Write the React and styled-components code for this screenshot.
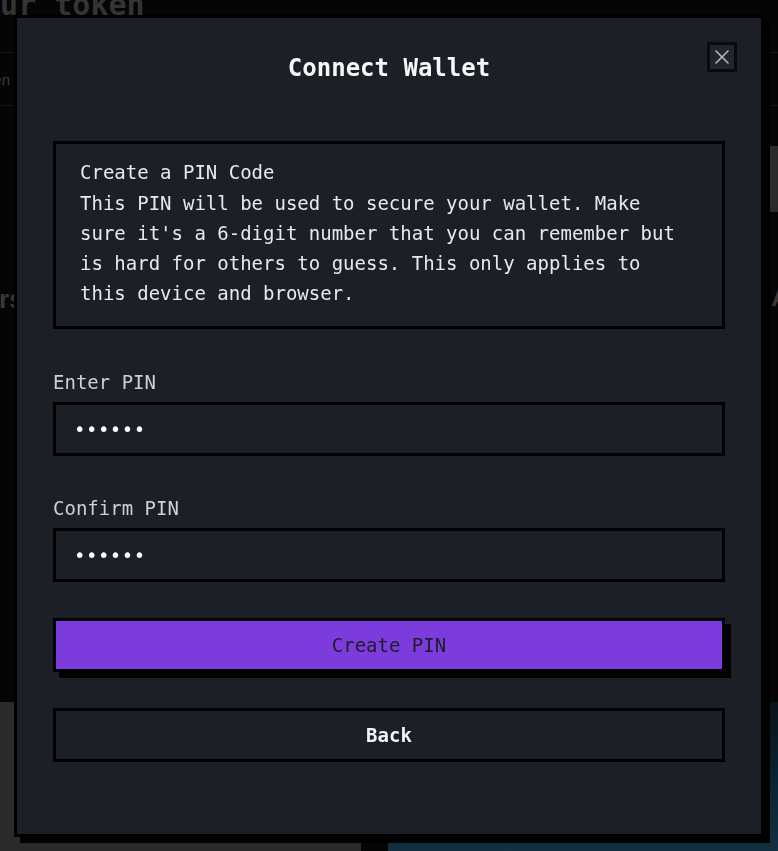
import styled, { createGlobalStyle } from "styled-components";
import { X } from "lucide-react";

const GlobalStyle = createGlobalStyle`
  body {
    margin: 0;
    background: #050506;
    font-family: "DejaVu Sans Mono", "Liberation Mono", monospace;
    overflow: hidden;
  }
`;

// dimmed page that sits behind the modal
const Page = styled.div`
  width: 778px;
  height: 851px;
  overflow: hidden;
  display: flex;
  flex-direction: column;
`;

const Heading = styled.h1`
  margin: -10px 0 0 -36px;
  font-size: 30px;
  line-height: 30px;
  font-weight: 700;
  color: #343434;
  white-space: nowrap;
`;

const TabBar = styled.div`
  margin-top: 32px;
  height: 52px;
  border-top: 1px solid #151515;
  border-bottom: 1px solid #151515;
  display: flex;
  align-items: center;
  justify-content: space-between;
  font-family: "Liberation Sans", sans-serif;
  font-size: 15px;
  color: #3c3c3c;
`;

const TabText = styled.span`
  margin-left: -30px;
`;

const Middle = styled.div`
  flex: 0 0 596px;
  display: flex;
  justify-content: space-between;
  font-family: "Liberation Sans", sans-serif;
  font-size: 26px;
  font-weight: 700;
  color: #3d3630;
`;

const SideCol = styled.div`
  display: flex;
  flex-direction: column;
  align-items: ${({ $right }) => ($right ? "flex-end" : "flex-start")};
  padding-top: ${({ $right }) => ($right ? "40px" : "178px")};
  gap: 70px;
`;

const SideText = styled.span`
  margin-left: ${({ $cut }) => $cut || 0};
  margin-right: ${({ $cutRight }) => $cutRight || 0};
`;

const SideBlock = styled.div`
  width: 8px;
  height: 66px;
  background: #2a2a2a;
`;

const Cards = styled.div`
  display: grid;
  grid-template-columns: 361px 1fr;
  gap: 27px;
  flex: 1;
`;

const Card = styled.div`
  background: ${({ $image }) =>
    $image
      ? "linear-gradient(180deg, #07131a 0%, #0b2230 50%, #123040 100%)"
      : "#2a2a2a"};
`;

const Overlay = styled.div`
  position: fixed;
  inset: 0;
  display: flex;
  align-items: center;
  justify-content: center;
`;

const Modal = styled.div`
  position: relative;
  box-sizing: border-box;
  width: 750px;
  height: 822px;
  background: #1d1f26;
  border: 3px solid #000;
  box-shadow: 6px 6px 0 #000;
  padding: 0 36px;
  display: flex;
  flex-direction: column;
  color: #e6e7ea;
`;

const Title = styled.h2`
  margin: 34px 0 0;
  text-align: center;
  font-size: 24px;
  line-height: 32px;
  font-weight: 700;
  color: #f7f7f8;
`;

const CloseButton = styled.button`
  position: absolute;
  top: 24px;
  right: 24px;
  width: 30px;
  height: 30px;
  padding: 0;
  border: 3px solid #0a0b0d;
  background: #22252d;
  color: #b4b6bb;
  display: flex;
  align-items: center;
  justify-content: center;
  cursor: pointer;
`;

const InfoBox = styled.div`
  margin-top: 57px;
  border: 3px solid #000;
  padding: 13px 40px 18px 24px;
  font-size: 19px;
  line-height: 30px;
  color: #e9e9ec;
`;

const InfoTitle = styled.div`
  margin-bottom: 1px;
`;

const Label = styled.label`
  display: block;
  margin-top: ${({ $gap }) => $gap};
  font-size: 19px;
  line-height: 24px;
  color: #ccd0d7;
`;

const PinInput = styled.input`
  margin-top: 8px;
  height: 54px;
  box-sizing: border-box;
  border: 3px solid #000;
  background: #1d1f26;
  color: #fff;
  padding: 0 18px;
  font-family: "DejaVu Sans Mono", monospace;
  font-size: 19px;
  letter-spacing: 0.5px;
  outline: none;
`;

const Button = styled.button`
  margin-top: 36px;
  height: 54px;
  border: 3px solid #000;
  background: ${({ $primary }) => ($primary ? "#7c3bdc" : "#1d1f26")};
  color: ${({ $primary }) => ($primary ? "#1d1f26" : "#f4f4f6")};
  box-shadow: ${({ $primary }) => ($primary ? "6px 6px 0 #000" : "none")};
  font-family: "DejaVu Sans Mono", monospace;
  font-size: 19px;
  font-weight: ${({ $primary }) => ($primary ? 400 : 700)};
  cursor: pointer;
`;

export default function App() {
  return (
    <>
      <GlobalStyle />
      <Page>
        <Heading>Your token</Heading>
        <TabBar>
          <TabText>Token</TabText>
        </TabBar>
        <Middle>
          <SideCol>
            <SideText $cut="-40px">Pairs</SideText>
          </SideCol>
          <SideCol $right>
            <SideBlock />
            <SideText $cutRight="-12px">A</SideText>
          </SideCol>
        </Middle>
        <Cards>
          <Card />
          <Card $image />
        </Cards>
      </Page>
      <Overlay>
        <Modal>
          <CloseButton aria-label="Close">
            <X size={26} strokeWidth={1.6} />
          </CloseButton>
          <Title>Connect Wallet</Title>
          <InfoBox>
            <InfoTitle>Create a PIN Code</InfoTitle>
            This PIN will be used to secure your wallet. Make sure it's a
            6-digit number that you can remember but is hard for others to
            guess. This only applies to this device and browser.
          </InfoBox>
          <Label $gap="41px">Enter PIN</Label>
          <PinInput type="password" value="123456" readOnly />
          <Label $gap="40px">Confirm PIN</Label>
          <PinInput type="password" value="123456" readOnly />
          <Button $primary>Create PIN</Button>
          <Button>Back</Button>
        </Modal>
      </Overlay>
    </>
  );
}
